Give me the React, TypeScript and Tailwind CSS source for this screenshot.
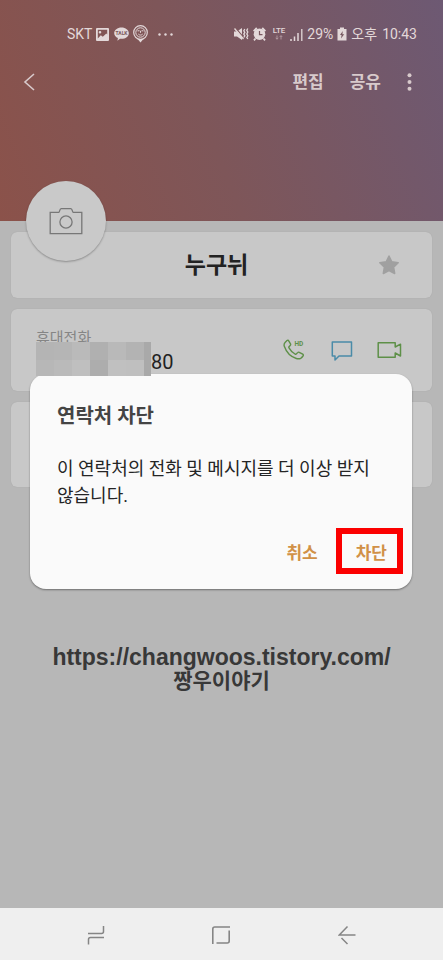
import React from "react";

const KR = "font-['Roboto','Noto_Sans_CJK_KR',sans-serif]";

// blurred phone number, one colour per block
const mosaic = [
  ["bg-[#b4b4b4]", "bg-[#b5b5b5]", "bg-[#bababa]", "bg-[#b0b0b0]", "bg-[#b9b9b9]", "bg-[#b3b3b3]", "bg-[#a9a9a9]"],
  ["bg-[#b7b7b7]", "bg-[#bababa]", "bg-[#bfbfbf]", "bg-[#adadad]", "bg-[#c0c0c0]", "bg-[#bfbfbf]", "bg-[#a9a9a9]"],
];

const StatusBar = () => {
  return (
    <div className="flex items-center justify-between h-6 pl-[67px] pr-[26px] text-sm text-[#e3d8d9]">
      <div className="flex items-center">
        <span>SKT</span>
        <svg className="ml-1" width="13" height="13" viewBox="0 0 13 13">
          <path
            fill="currentColor"
            fillRule="evenodd"
            d="M1 0h11a1 1 0 0 1 1 1v11a1 1 0 0 1-1 1H1a1 1 0 0 1-1-1V1a1 1 0 0 1 1-1zM1.800 1.800v8.700l3-3.300 2 1.600L10.300 5.500 11.200 6.500V1.800zM4 3a1.300 1.300 0 1 1 0 2.600A1.300 1.300 0 0 1 4 3z"
          />
        </svg>
        <svg className="ml-[5px]" width="15" height="14" viewBox="0 0 15 14">
          <path
            fill="currentColor"
            d="M7.500 0.500C11.600 0.500 14.800 3 14.800 6.200s-3.200 5.600-7.300 5.600c-.6 0-1 0-1.500-.1L3.400 13.700l.5-2.700C1.700 10 .2 8.300.2 6.200.2 3 3.400.5 7.500.5z"
          />
          <text x="7.500" y="8" fontSize="5" fontWeight="700" textAnchor="middle" fill="#7b565c">
            TALK
          </text>
        </svg>
        <svg className="ml-1" width="15" height="18" viewBox="0 0 15 18" fill="none" stroke="currentColor">
          <circle cx="7.500" cy="7.500" r="6.800" strokeWidth="1.200" />
          <circle cx="7.500" cy="7.500" r="4.700" strokeWidth="1" />
          <path d="M4.600 14h5.800l-2.900 3.500z" fill="currentColor" stroke="none" />
          <path d="M4.500 5.800h2M8.500 5.800h2M7.500 5.800v2M5.300 9c1.200 1.400 3.200 1.400 4.400 0" strokeWidth="1" />
        </svg>
        <svg className="ml-[10px]" width="15" height="3" viewBox="0 0 15 3" fill="currentColor">
          <circle cx="1.500" cy="1.500" r="1.200" />
          <circle cx="7.500" cy="1.500" r="1.200" />
          <circle cx="13.500" cy="1.500" r="1.200" />
        </svg>
      </div>
      <div className="flex items-center">
        <svg width="15" height="14" viewBox="0 0 15 14">
          <path fill="currentColor" d="M0 4.500h3L8 1v12L3 9.500H0z" />
          <path d="M1.500 1L10 11" stroke="#7d565b" strokeWidth="1.200" />
          <path d="M0.500 1.500L9.500 12" stroke="currentColor" strokeWidth="1.300" />
          <path
            d="M10.800 2l-1 1.700 1 1.700-1 1.700 1 1.700-1 1.700M13.800 1.500l-1 1.800 1 1.800-1 1.800 1 1.800-1 1.800 1 1.500"
            fill="none"
            stroke="currentColor"
            strokeWidth="1.300"
          />
        </svg>
        <svg className="ml-1" width="13" height="14" viewBox="0 0 13 14">
          <circle cx="6.500" cy="7.200" r="5.800" fill="currentColor" />
          <path d="M0.600 4.200L3.800 1M9.200 1l3.200 3.200M2.500 11.500L1 13.300M10.500 11.500L12 13.300" stroke="currentColor" strokeWidth="1.800" />
          <path d="M6.500 4v3.600h3" fill="none" stroke="#79575f" strokeWidth="1.200" />
        </svg>
        <svg className="ml-[6px]" width="14" height="14" viewBox="0 0 14 14">
          <text x="7" y="6" fontSize="8" fontWeight="500" textAnchor="middle" fill="currentColor">
            LTE
          </text>
          <path d="M5 8.500v3.500M3.800 10.800L5 12.300l1.200-1.500M9 12.500V9M7.800 10L9 8.500l1.200 1.500" fill="none" stroke="#b39ba2" strokeWidth="0.900" />
        </svg>
        <svg className="ml-1" width="13" height="13" viewBox="0 0 13 13" stroke="currentColor" strokeWidth="1.500">
          <path d="M1 11v2M4.500 8.500V13M8 5v8" />
          <path d="M11.800 1v12" strokeWidth="1.300" />
        </svg>
        <span className="ml-1">29%</span>
        <svg className="ml-1" width="10" height="14" viewBox="0 0 10 14">
          <path fill="currentColor" d="M3 0.500h4V2h2.500v11.500h-9V2H3z" />
          <path d="M5.800 4L3 8h1.600L4 11.500 7.200 7.200H5.400z" fill="#76575f" />
        </svg>
        <span className="ml-1">오후</span>
        <span className="ml-[5px]">10:43</span>
      </div>
    </div>
  );
};

const Header = () => {
  return (
    <header className="relative h-[221px] pt-[22px] bg-[linear-gradient(68deg,#8b524a_0%,#7e5659_46%,#6d5973_100%)]">
      <StatusBar />
      <div className="flex items-center mt-6 pl-[23px] pr-[31px] text-[17px] leading-6 font-bold text-[#d8caccff]">
        <button aria-label="뒤로" className="mr-auto">
          <svg width="12" height="18" viewBox="0 0 12 18" fill="none" stroke="currentColor" strokeWidth="1.600">
            <path d="M11 1L2 9l9 8" />
          </svg>
        </button>
        <button>편집</button>
        <button className="ml-[26px]">공유</button>
        <button aria-label="더보기" className="ml-[26px]">
          <svg width="5" height="18" viewBox="0 0 5 18" fill="currentColor">
            <circle cx="2.500" cy="2.200" r="2" />
            <circle cx="2.500" cy="9" r="2" />
            <circle cx="2.500" cy="15.800" r="2" />
          </svg>
        </button>
      </div>
      <button
        aria-label="사진 추가"
        className="absolute left-[26px] -bottom-10 z-10 flex h-20 w-20 items-center justify-center rounded-full bg-[#c9c9c9] shadow-[0_1px_2px_rgba(0,0,0,0.3)]"
      >
        <svg width="34" height="28" viewBox="0 0 34 28" fill="none" stroke="#777" strokeWidth="1.300">
          <path d="M1.200 5.300h8.600c1 0 .6-3.600 2.400-3.600h9.600c1.800 0 1.400 3.600 2.400 3.600h8.600v21.400H1.200z" />
          <circle cx="17" cy="15" r="6.100" />
        </svg>
      </button>
    </header>
  );
};

const card = "rounded-md bg-[#c8c8c8] shadow-[0_0_1px_rgba(0,0,0,0.15)]";

const PhoneCard = () => {
  return (
    <section className={`${card} flex h-[82px] pl-[25px] pr-[30px] pt-[19px]`}>
      <div>
        <p className="h-[14px] text-[15px] leading-5 text-[#858585]">휴대전화</p>
        <div className="flex">
          <div className="relative z-20">
            {mosaic.map((row, i) => (
              <div key={i} className="flex">
                {row.map((color, j) => (
                  <span key={j} className={`${color} ${j === 6 ? "w-[7px]" : "w-[18px]"} ${i === 0 ? "h-[18px]" : "h-4"}`} />
                ))}
              </div>
            ))}
          </div>
          <span className="pt-2 text-xl leading-6 text-[#222]">80</span>
        </div>
      </div>
      <div className="ml-auto flex h-11 items-center">
        <button aria-label="전화">
          <svg width="22" height="22" viewBox="0 0 22 22" fill="none" stroke="#5e9048" strokeWidth="1.400">
            <path
              strokeLinejoin="round"
              d="M2.300 3.200L4 1.500c.6-.5 1.300-.4 1.700.3l1.800 3c.3.6.2 1.100-.3 1.600L6.200 7.400c-.4.4-.5.900-.2 1.400 1.600 2.900 3.300 4.700 6 6.200.6.300 1.100.2 1.500-.2l1.100-1.200c.4-.5 1-.6 1.600-.3l3.500 1.900c.7.400.8 1 .4 1.600-1.500 2.500-3.800 3.600-6.800 2.700C7.500 17.700 3.400 13.300 1.300 7.300.8 5.800 1 4.500 2.300 3.200z"
            />
            <text x="11.500" y="7" fontSize="6.500" fontWeight="700" fill="#5e9048" stroke="none">
              HD
            </text>
          </svg>
        </button>
        <button aria-label="메시지" className="ml-[26px]">
          <svg width="22" height="22" viewBox="0 0 22 22" fill="none" stroke="#4a8ba8" strokeWidth="1.500">
            <path strokeLinejoin="round" d="M1.300 3h19.200v14H8l-4 4V17H1.300z" />
          </svg>
        </button>
        <button aria-label="영상 통화" className="ml-6">
          <svg width="25" height="18" viewBox="0 0 25 18" fill="none" stroke="#5e9048" strokeWidth="1.500">
            <path strokeLinejoin="round" d="M18.200 6V1.700h-17v14.600h17V12l5.300 3V3.200z" />
          </svg>
        </button>
      </div>
    </section>
  );
};

const BlockDialog = () => {
  return (
    <div className="absolute inset-x-0 top-[374px] z-10 pl-[30px] pr-[31px]">
      <div
        role="dialog"
        aria-labelledby="block-title"
        className="rounded-2xl bg-[#fafafa] pt-7 pb-[15px] pl-[27px] pr-[9px] shadow-[0_1px_2px_rgba(0,0,0,0.4)]"
      >
        <h2 id="block-title" className="text-xl leading-7 font-bold text-[#444]">
          연락처 차단
        </h2>
        <p className="mt-[25px] pr-4 text-[18px] leading-[27px] break-keep text-[#252525]">
          이 연락처의 전화 및 메시지를 더 이상 받지 않습니다.
        </p>
        <div className="mt-[19px] flex items-stretch justify-end text-[17px] leading-6 font-bold text-[#d19147]">
          <button className="pt-1">취소</button>
          <button className="ml-[18px] h-[46px] border-[6px] border-[#fb0000] pl-[14px] pr-[10px] pt-1">차단</button>
        </div>
      </div>
    </div>
  );
};

const NavBar = () => {
  return (
    <nav className="mt-auto flex h-[52px] items-center justify-around bg-[#efefef] px-[34px] pt-0.5 text-[#858585]">
      <button aria-label="최근 앱">
        <svg width="18" height="20" viewBox="0 0 18 20" fill="none" stroke="currentColor" strokeWidth="1.500">
          <path d="M1 8.500h13.500q2 0 2-2V1M17 12.500H3.500q-2 0-2 2V19.500" />
        </svg>
      </button>
      <button aria-label="홈">
        <svg width="20" height="20" viewBox="0 0 20 20" fill="none" stroke="currentColor" strokeWidth="1.600">
          <path d="M1.800 19V4q0-2 2-2H19M18.200 5.500V16q0 2-2 2H5.500" />
        </svg>
      </button>
      <button aria-label="뒤로 가기">
        <svg width="18" height="20" viewBox="0 0 18 20" fill="none" stroke="currentColor" strokeWidth="1.500">
          <path d="M9.500 1.500L1.300 10H17.500M3.500 13l6 6" />
        </svg>
      </button>
    </nav>
  );
};

const App = () => {
  return (
    <div className={`relative flex min-h-screen flex-col bg-[#b7b7b7] ${KR}`}>
      <Header />
      <main className="flex flex-col gap-[11px] px-[11px] pt-[11px]">
        <section className={`${card} grid h-[66px] grid-cols-[1fr_auto_1fr] items-center pr-8 pl-[22px]`}>
          <h1 className="col-start-2 pt-0.5 text-[23px] leading-8 font-bold text-[#222]">누구뉘</h1>
          <button aria-label="즐겨찾기" className="justify-self-end">
            <svg width="22" height="22" viewBox="0 0 22 22" fill="#a0a0a0" stroke="#a0a0a0" strokeWidth="1.500" strokeLinejoin="round">
              <path d="M11 2l2.800 5.800 6.400.9-4.600 4.400 1.100 6.400L11 16.500l-5.700 3 1.100-6.400-4.600-4.400 6.400-.9z" />
            </svg>
          </button>
        </section>
        <PhoneCard />
        <section className={`${card} h-[85px]`} />
      </main>
      <footer className="mt-[160px] mb-10 text-center font-bold text-[#383838]">
        <a href="https://changwoos.tistory.com/" className="block font-['Liberation_Sans',sans-serif] text-[23px] leading-5">
          https://changwoos.tistory.com/
        </a>
        <p className="pt-1 text-[21px] leading-5">짱우이야기</p>
      </footer>
      <BlockDialog />
      <NavBar />
    </div>
  );
};

export default App;
